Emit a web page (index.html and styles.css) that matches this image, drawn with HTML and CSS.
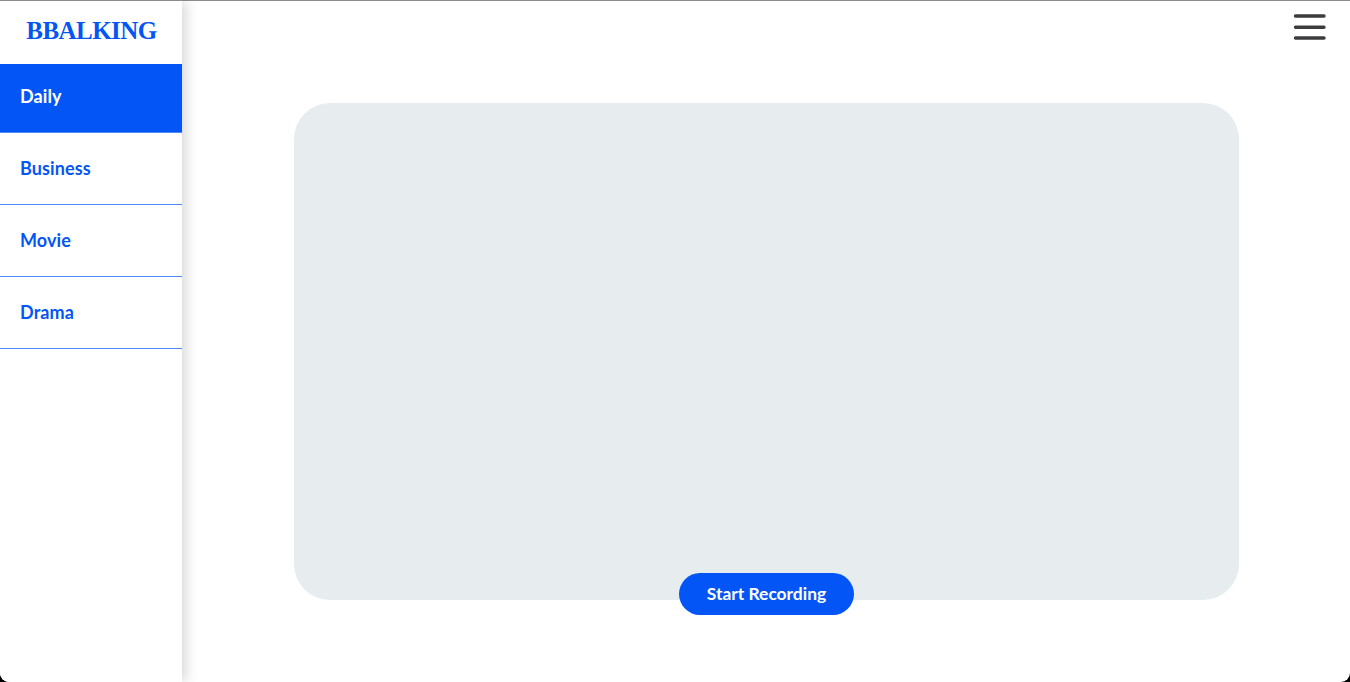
FILE: index.html
```html
<!DOCTYPE html>
<html lang="en">
<head>
  <meta charset="UTF-8">
  <title>BBALKING</title>
  <link rel="stylesheet" href="styles.css">
</head>
<body>
  <div class="window">
    <div class="sidebar">
      <div class="logo">BBALKING</div>
      <div class="nav-item active">Daily</div>
      <div class="nav-item">Business</div>
      <div class="nav-item">Movie</div>
      <div class="nav-item">Drama</div>
    </div>
    <div class="main">
      <div class="topbar">
        <svg class="menu-icon" width="34" height="30" viewBox="0 0 34 30">
          <path d="M2.5 4H31M2.5 15.3H31M2.5 26H31" fill="none" stroke="#3c3c3e" stroke-width="3.4" stroke-linecap="round"/>
        </svg>
      </div>
      <div class="stage">
        <div class="preview"></div>
        <button class="record-btn">Start Recording</button>
      </div>
    </div>
  </div>
</body>
</html>
```

FILE: styles.css
```css
html, body {
  margin: 0;
  padding: 0;
  height: 100%;
  background-color: #000;
  overflow: hidden;
}
body {
  font-family: "Lato", "Open Sans", sans-serif;
}
.window {
  display: flex;
  height: 681px;
  border-top: 1px solid #8a8a8a;
  border-radius: 0 0 9px 9px;
  background-color: #fff;
  overflow: hidden;
}
.sidebar {
  width: 182px;
  flex-shrink: 0;
  background-color: #fff;
  box-shadow: 4px 0 12px rgba(0, 0, 0, 0.16);
  position: relative;
}
.logo {
  height: 63px;
  line-height: 60px;
  padding-left: 1px;
  text-align: center;
  font-family: "Liberation Serif", serif;
  font-weight: bold;
  font-size: 25px;
  letter-spacing: -0.55px;
  color: #0455f5;
}
.nav-item {
  height: 71px;
  line-height: 70px;
  padding-left: 20px;
  font-size: 18px;
  font-weight: 700;
  letter-spacing: 0.1px;
  color: #0455f5;
  border-bottom: 1px solid #4f86f9;
}
.nav-item.active {
  height: 68px;
  line-height: 65px;
  background-color: #0455f5;
  color: #fff;
}
.main {
  flex: 1;
  display: flex;
  flex-direction: column;
}
.topbar {
  display: flex;
  justify-content: flex-end;
  padding: 11px 23px 0 0;
  height: 102px;
  box-sizing: border-box;
}
.stage {
  display: flex;
  flex-direction: column;
  align-items: center;
  margin-left: 112px;
  width: 945px;
}
.preview {
  width: 945px;
  height: 497px;
  border-radius: 36px;
  background-color: #e7ecef;
}
.record-btn {
  width: 175px;
  height: 42px;
  margin-top: -27px;
  padding: 0 0 2px;
  border: none;
  border-radius: 21px;
  background-color: #0455f5;
  color: #fff;
  font-family: inherit;
  font-size: 17.4px;
  font-weight: 700;
}
```
